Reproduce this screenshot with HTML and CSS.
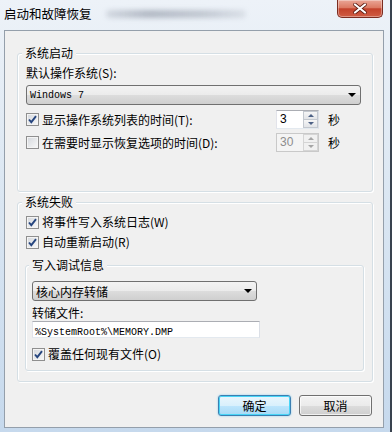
FILE: index.html
```html
<!DOCTYPE html>
<html lang="zh-CN">
<head>
  <meta charset="UTF-8">
  <title>启动和故障恢复</title>
  <link rel="stylesheet" href="styles.css">
</head>
<body>
  <div class="window">
    <div class="titlebar">
      <span class="title">启动和故障恢复</span>
      <span class="glass-blur"></span>
      <span class="close">
        <svg width="14" height="11" viewBox="0 0 14 11">
          <path d="M2 1.5 L12 9.5 M12 1.5 L2 9.5" stroke="#5a1a10" stroke-width="3.6" stroke-linecap="round"/>
          <path d="M2 1.5 L12 9.5 M12 1.5 L2 9.5" stroke="#fff" stroke-width="2.2" stroke-linecap="round"/>
        </svg>
      </span>
    </div>

    <div class="client">
      <fieldset class="group startup">
        <legend>系统启动</legend>
        <div class="label">默认操作系统(S):</div>
        <div class="combo os">
          <span class="mono">Windows 7</span>
          <span class="arrow"></span>
        </div>
        <div class="timerow">
          <label class="check">
            <span class="box"><svg width="11" height="11" viewBox="0 0 11 11"><path d="M2 5.5 L4.3 8.2 L9 2.2" fill="none" stroke="#26457e" stroke-width="1.9"/></svg></span>
            显示操作系统列表的时间(T):
          </label>
          <span class="spin">
            <span class="spin-val">3</span>
            <span class="spin-btns"><i class="up"></i><i class="down"></i></span>
          </span>
          <span class="unit">秒</span>
        </div>
        <div class="timerow second">
          <label class="check">
            <span class="box"></span>
            在需要时显示恢复选项的时间(D):
          </label>
          <span class="spin off">
            <span class="spin-val">30</span>
            <span class="spin-btns"><i class="up"></i><i class="down"></i></span>
          </span>
          <span class="unit">秒</span>
        </div>
      </fieldset>

      <fieldset class="group failure">
        <legend>系统失败</legend>
        <label class="check row">
          <span class="box"><svg width="11" height="11" viewBox="0 0 11 11"><path d="M2 5.5 L4.3 8.2 L9 2.2" fill="none" stroke="#26457e" stroke-width="1.9"/></svg></span>
          将事件写入系统日志(W)
        </label>
        <label class="check row second">
          <span class="box"><svg width="11" height="11" viewBox="0 0 11 11"><path d="M2 5.5 L4.3 8.2 L9 2.2" fill="none" stroke="#26457e" stroke-width="1.9"/></svg></span>
          自动重新启动(R)
        </label>

        <fieldset class="group debug">
          <legend>写入调试信息</legend>
          <div class="combo dump">
            <span>核心内存转储</span>
            <span class="arrow"></span>
          </div>
          <div class="label">转储文件:</div>
          <div class="textbox"><span class="mono">%SystemRoot%\MEMORY.DMP</span></div>
          <label class="check row overwrite">
            <span class="box"><svg width="11" height="11" viewBox="0 0 11 11"><path d="M2 5.5 L4.3 8.2 L9 2.2" fill="none" stroke="#26457e" stroke-width="1.9"/></svg></span>
            覆盖任何现有文件(O)
          </label>
        </fieldset>
      </fieldset>

      <div class="buttons">
        <button class="btn default">确定</button>
        <button class="btn">取消</button>
      </div>
    </div>
  </div>
</body>
</html>
```

FILE: styles.css
```css
body {
  margin: 0;
  font-family: "Noto Sans CJK SC", "Noto Sans", sans-serif;
  font-size: 12px;
  color: #000;
}
.window {
  width: 392px;
  height: 432px;
  box-sizing: border-box;
  border-right: 2px solid #39434f;
  display: flex;
  flex-direction: column;
  background: linear-gradient(#edf2f8, #dde8f3 40%, #c6d9ed);
}
.titlebar {
  height: 30px;
  flex: none;
  display: flex;
  align-items: flex-start;
  padding: 0 7px 0 4px;
  box-sizing: border-box;
}
.title {
  margin-top: 6px;
  line-height: 16px;
  font-size: 12.5px;
}
.glass-blur {
  width: 140px;
  height: 8px;
  margin: 10px 0 0 14px;
  border-radius: 4px;
  background: linear-gradient(90deg, rgba(70, 80, 100, 0.15), rgba(70, 80, 100, 0.35) 30%, rgba(70, 80, 100, 0.25) 70%, rgba(70, 80, 100, 0.1));
  filter: blur(2.5px);
}
.close {
  margin-left: auto;
  width: 46px;
  height: 18px;
  box-sizing: border-box;
  border: 1px solid #7b2c20;
  border-top: none;
  border-radius: 0 0 5px 5px;
  background: linear-gradient(#eaa696, #dc7a63 45%, #c3422b 52%, #cf5d44);
  box-shadow: inset 0 0 0 1px rgba(255, 255, 255, 0.35);
  display: flex;
  align-items: center;
  justify-content: center;
}
.client {
  flex: 1;
  margin: 0 6px 4px 4px;
  border: 1px solid #949fab;
  background: #f0f0f0;
  padding: 15px 10px 0 12px;
}
.group {
  margin: 0;
  padding: 0 8px 10px 8px;
  border: 1px solid #d5dfe5;
  border-radius: 3px;
  box-shadow: inset 1px 1px 0 #fff, 1px 1px 0 #fff;
  min-width: 0;
}
.group legend {
  padding: 0 3px;
  margin-left: -4px;
  line-height: 14px;
  background: #f0f0f0;
}
.startup {
  padding-bottom: 39px;
}
.failure {
  margin-top: 3px;
}
.debug {
  margin: 8px 0 0 -1px;
  padding: 0 6px 8px 6px;
}
.debug legend {
  margin-left: -3px;
}
.label {
  margin-top: 5px;
  line-height: 16px;
}
.debug .label {
  margin-top: 4px;
}
.mono {
  font-family: "Liberation Mono", monospace;
  font-size: 10px;
}
.combo {
  margin-top: 4px;
  height: 20px;
  box-sizing: border-box;
  border: 1px solid #707070;
  border-radius: 3px;
  background: linear-gradient(#f3f3f3, #ebebeb 50%, #dddddd 50%, #cfcfcf);
  display: flex;
  align-items: center;
  justify-content: space-between;
  padding: 0 4px 0 3px;
}
.combo.os {
  width: 335px;
}
.combo.dump {
  width: 225px;
  margin-top: 9px;
}
.arrow {
  width: 0;
  height: 0;
  border-left: 4px solid transparent;
  border-right: 4px solid transparent;
  border-top: 4px solid #000;
}
.timerow {
  display: grid;
  grid-template-columns: 1fr 43px 21px;
  align-items: center;
  height: 19px;
  margin: 5px 24px 0 0;
}
.timerow.second {
  margin-top: 4px;
}
.check {
  display: flex;
  align-items: center;
  line-height: 16px;
}
.row {
  margin-top: 5px;
}
.row.second {
  margin-top: 4px;
}
.row.overwrite {
  margin-top: 8px;
}
.box {
  width: 13px;
  height: 13px;
  box-sizing: border-box;
  margin-right: 3px;
  border: 1px solid #8f8f8f;
  background: linear-gradient(135deg, #d4d7dc, #f9f9f9);
  box-shadow: inset 0 0 0 1px #f4f4f4;
  display: flex;
  align-items: center;
  justify-content: center;
}
.spin {
  height: 19px;
  box-sizing: border-box;
  display: flex;
  border: 1px solid;
  border-color: #abadb3 #dbdfe6 #e3e9ef #e2e3ea;
  background: #fff;
}
.spin-val {
  flex: 1;
  padding-left: 3px;
  line-height: 17px;
  font-family: "Liberation Sans", sans-serif;
  font-size: 12px;
}
.spin-btns {
  width: 15px;
  display: flex;
  flex-direction: column;
}
.spin-btns i {
  flex: 1;
  display: flex;
  align-items: center;
  justify-content: center;
  border: 1px solid #c3c8cf;
  background: linear-gradient(#f6f6f6, #e2e4e8);
}
.spin-btns i + i {
  border-top: none;
}
.spin-btns .up::before,
.spin-btns .down::before {
  content: "";
  border-left: 3px solid transparent;
  border-right: 3px solid transparent;
}
.spin-btns .up::before {
  border-bottom: 3px solid #4d6185;
}
.spin-btns .down::before {
  border-top: 3px solid #4d6185;
}
.spin.off {
  background: #f4f4f4;
  border-color: #c9c9c9;
  color: #8d8d8d;
}
.spin.off .spin-btns i {
  border-color: #d5d5d5;
  background: #f1f1f1;
}
.spin.off .up::before {
  border-bottom-color: #a6a6a6;
}
.spin.off .down::before {
  border-top-color: #a6a6a6;
}
.unit {
  padding-left: 9px;
  line-height: 16px;
}
.textbox {
  width: 228px;
  height: 17px;
  box-sizing: border-box;
  border: 1px solid;
  border-color: #abadb3 #dbdfe6 #e3e9ef #e2e3ea;
  background: #fff;
  padding-left: 2px;
  line-height: 15px;
}
.buttons {
  display: flex;
  justify-content: flex-end;
  gap: 8px;
  margin: 13px 1px 0 0;
}
.btn {
  width: 73px;
  height: 21px;
  padding: 0;
  font-family: inherit;
  font-size: 12px;
  color: #000;
  border: 1px solid #707070;
  border-radius: 3px;
  background: linear-gradient(#f3f3f3, #ebebeb 50%, #dddddd 50%, #cfcfcf);
  box-shadow: inset 0 0 0 1px rgba(255, 255, 255, 0.7);
}
.btn.default {
  border-color: #3c7fb1;
  background: linear-gradient(#eaf6fd, #d9f0fc 50%, #bee6fd 50%, #a7d9f5);
  box-shadow: inset 0 0 0 1px #48d5f7, 0 0 2px #7fc9ee;
}
```
